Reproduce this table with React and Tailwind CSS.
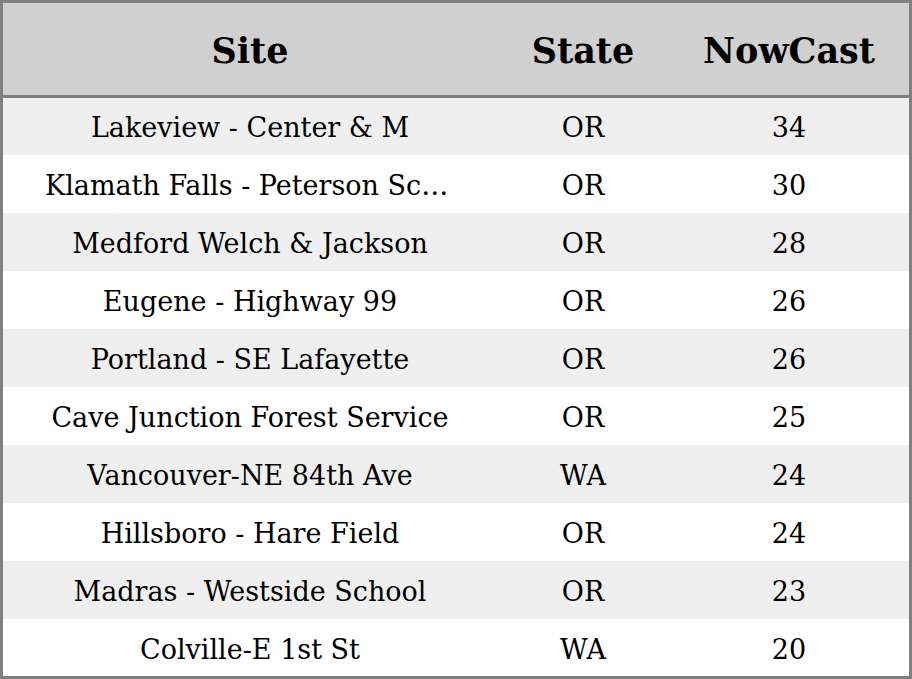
const rows = [
  ['Lakeview - Center & M', 'OR', 34],
  ['Klamath Falls - Peterson School', 'OR', 30],
  ['Medford Welch & Jackson', 'OR', 28],
  ['Eugene - Highway 99', 'OR', 26],
  ['Portland - SE Lafayette', 'OR', 26],
  ['Cave Junction Forest Service', 'OR', 25],
  ['Vancouver-NE 84th Ave', 'WA', 24],
  ['Hillsboro - Hare Field', 'OR', 24],
  ['Madras - Westside School', 'OR', 23],
  ['Colville-E 1st St', 'WA', 20],
];

export default function App() {
  return (
    <div
      className="w-[912px] h-[679px] overflow-hidden border-[3px] border-[#808080] bg-white text-black"
      style={{ fontFamily: '"DejaVu Serif", serif' }}
    >
      <div className="flex h-[95px] pt-[4px] bg-[#d0d0d0] border-b-[3px] border-[#808080] text-[35px] font-bold">
        <div className="w-[494px] flex items-center justify-center">Site</div>
        <div className="w-[172px] flex items-center justify-center">State</div>
        <div className="flex-1 flex items-center justify-center">NowCast</div>
      </div>
      <div className="text-[27px]">
        {rows.map(([site, state, val], i) => (
          <div
            key={i}
            className={`${i === 0 ? 'h-[57px]' : 'h-[58px]'} pt-[4px] flex items-center ${i % 2 === 0 ? 'bg-[#efefef]' : 'bg-white'}`}
          >
            <div className="w-[494px] px-[42px] truncate text-center">{site}</div>
            <div className="w-[172px] text-center">{state}</div>
            <div className="flex-1 text-center">{val}</div>
          </div>
        ))}
      </div>
    </div>
  );
}
